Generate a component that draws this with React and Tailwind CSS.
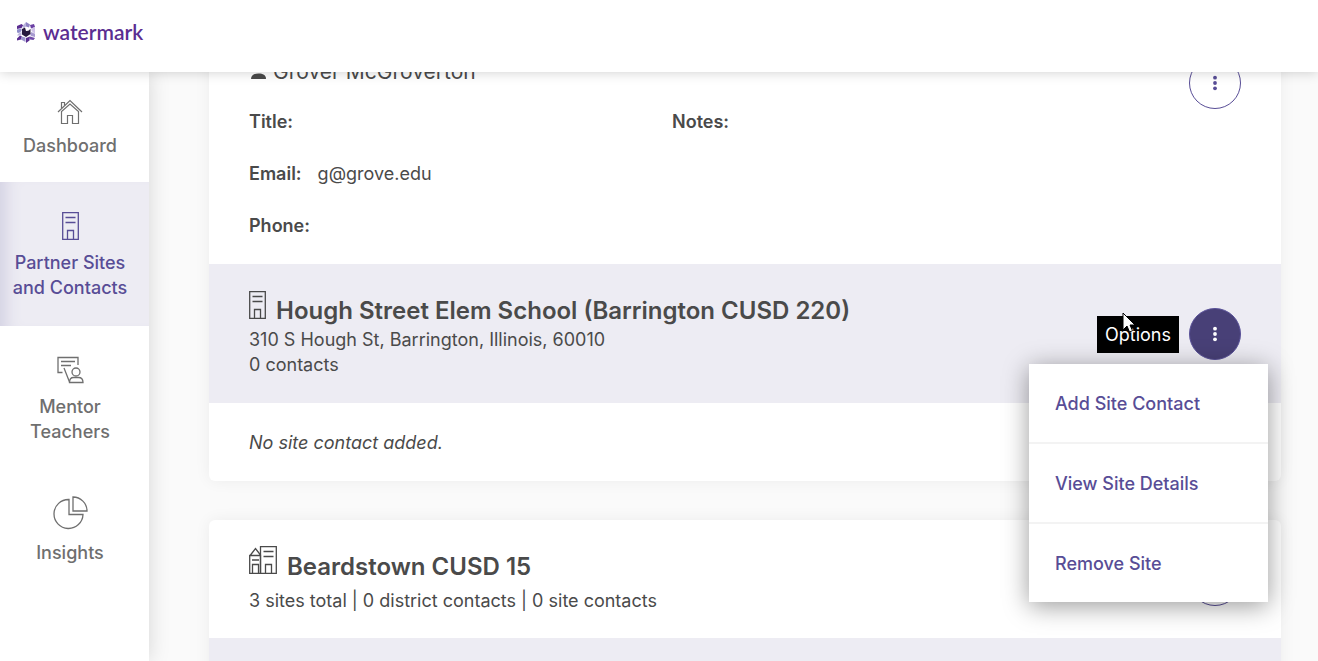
import { useState } from 'react'

const NAV = [
  { id: 'dashboard', lines: ['Dashboard'], icon: HouseIcon, box: 'h-[110px] gap-2 pt-[27px]' },
  { id: 'sites', lines: ['Partner Sites', 'and Contacts'], icon: SiteIcon, box: 'h-36 gap-2.5 pt-[30px]' },
  { id: 'mentors', lines: ['Mentor', 'Teachers'], icon: MentorIcon, box: 'h-36 gap-2.5 pt-[30px]' },
  { id: 'insights', lines: ['Insights'], icon: PieIcon, box: 'h-[132px] gap-2.5 pt-[26px]' },
]

const MENU = ['Add Site Contact', 'View Site Details', 'Remove Site']

function Logo() {
  return (
    <svg width="18" height="21" viewBox="0 0 18 21" aria-hidden="true">
      <path d="M0 4l4.500-2 2 1.500L4.500 6 0 7z" fill="#5b2d91" />
      <path d="M9 0l4 2.500-1 3-3-1z" fill="#8f83c4" />
      <path d="M9 0v4.500L6.500 6 5 4.500z" fill="#b9b3dc" />
      <path d="M13 3l4-1 1 3-4 1.500z" fill="#6a3fa3" />
      <path d="M18 5v7l-3.500-3V6.500z" fill="#cfc2e8" />
      <path d="M0 7.500l4.500-1V9L2 11 0 10.500z" fill="#8f8dc9" />
      <path d="M0 13.500L2 11l2.500-1V13l-2 .500z" fill="#c0badf" />
      <path d="M18 12v3l-4-1-1-2 1.500-2z" fill="#a79ad0" />
      <path d="M0 16.500l3-3 2 1-1 3-4 1z" fill="#5b2d91" />
      <path d="M4.500 14.500l4 1V20L4 17.500z" fill="#9b95cc" />
      <path d="M9 16l4-1.500-.500 4L9 21z" fill="#5b2d91" />
      <path d="M13 14.500l5 1.500-1.500 2-3.500-.500z" fill="#6f4aa8" />
      <path d="M5 7l3-1.500L9 9l4.500-2v5L9 15l-4-2.500z" fill="#261a3d" />
      <path d="M9 5l4 1.500-1 2L9 9z" fill="#fff" />
    </svg>
  )
}

function HouseIcon() {
  return (
    <svg width="26" height="26" viewBox="0 0 26 26" fill="none" stroke="currentColor" strokeWidth="1.200" aria-hidden="true">
      <path d="M1 13L13 1.500l12 11.500" />
      <path d="M4.500 12.500v12h6v-8h5v8h6v-12L13 5z" />
      <path d="M4.500 9V3.500h3v3" />
    </svg>
  )
}

function SiteIcon() {
  return (
    <svg width="17" height="28" viewBox="0 0 17 28" fill="none" stroke="currentColor" strokeWidth="1.300" aria-hidden="true">
      <path d="M.7.7h15.600v26.600H.7z" />
      <path d="M3.500 5.500h10M3.500 10.500h10M5.500 27.500v-9h6v9" />
    </svg>
  )
}

function DistrictIcon() {
  return (
    <svg width="28" height="28" viewBox="0 0 28 28" fill="none" stroke="currentColor" strokeWidth="1.300" aria-hidden="true">
      <path d="M11.500.7h15.800v26.600H11.500zM14.500 5.500h10M14.500 10.500h10M16.500 27.500v-9h6v9" />
      <path d="M.7 9.500h10.800v17.800H.7zM1.500 9l5-6.500 5 6.500M3 14h7M3.500 27.500v-9h6v9" />
    </svg>
  )
}

function MentorIcon() {
  return (
    <svg width="27" height="28" viewBox="0 0 27 28" fill="none" stroke="currentColor" strokeWidth="1.300" aria-hidden="true">
      <path d="M5.500 16.500H1V1.500h20V9M4 5.500h14M4 9.500h10M7 12l5.500 14" />
      <circle cx="19" cy="16" r="4" />
      <path d="M12.500 26.500c0-3.500 2-5 4-5h5c2.500 0 4.500 1.500 4.500 5z" />
    </svg>
  )
}

function PieIcon() {
  return (
    <svg width="36" height="34" viewBox="0 0 36 34" fill="none" stroke="currentColor" strokeWidth="1.300" aria-hidden="true">
      <path d="M17 3.500a14.500 14.500 0 1 0 14 15H17z" />
      <path d="M21 1v14h14A14 14 0 0 0 21 1z" />
    </svg>
  )
}

function OptionsButton({ active, label, onClick }) {
  return (
    <button
      type="button"
      aria-label={label}
      onClick={onClick}
      className={
        active
          ? 'flex size-[52px] shrink-0 items-center justify-center rounded-full border border-[#5a5299] bg-[#484077] text-white'
          : 'flex size-[52px] shrink-0 items-center justify-center rounded-full border border-[#584d96] bg-white text-[#584d96]'
      }
    >
      <svg width="4" height="16" viewBox="0 0 4 16" fill="currentColor" aria-hidden="true">
        <circle cx="2" cy="2.700" r="1.900" />
        <circle cx="2" cy="8" r="1.900" />
        <circle cx="2" cy="13.300" r="1.900" />
      </svg>
    </button>
  )
}

function SideNav({ current, onSelect }) {
  return (
    <nav className="z-10 w-[149px] shrink-0 bg-white shadow-[0_0_20px_rgba(0,0,0,0.15)]">
      {NAV.map(({ id, lines, icon: Icon, box }) => (
        <a
          key={id}
          href={`#${id}`}
          onClick={() => onSelect(id)}
          className={
            'flex flex-col items-center pr-[9px] text-center text-lg leading-[25px] font-medium ' + box + ' ' +
            (id === current
              ? 'bg-[#edecf3] text-[#584d96] shadow-[inset_18px_0_16px_-12px_#d3d1e3]'
              : 'text-[#6f6f6f]')
          }
        >
          <Icon />
          <span>
            {lines.map(line => <span key={line} className="block whitespace-nowrap">{line}</span>)}
          </span>
        </a>
      ))}
    </nav>
  )
}

function SiteMenu() {
  return (
    <ul className="absolute top-14 right-[-27px] z-10 w-[239px] divide-y-2 divide-[#f3f3f3] bg-white shadow-[0_4px_24px_rgba(0,0,0,0.4)]">
      {MENU.map(item => (
        <li key={item}>
          <button type="button" className="h-[78px] w-full px-[26px] pt-0.5 text-left text-lg font-medium text-[#584d96]">
            {item}
          </button>
        </li>
      ))}
    </ul>
  )
}

function Pointer() {
  return (
    <svg className="absolute -top-1 left-[25px]" width="13" height="21" viewBox="0 0 13 21" aria-hidden="true">
      <path d="M1 1v17l4-4 2.500 6 3-1.300L8 13h5z" fill="#fff" stroke="#000" strokeWidth="1" />
    </svg>
  )
}

export default function App() {
  const [current, setCurrent] = useState('sites')
  const [open, setOpen] = useState(true)

  return (
    <div className="flex h-screen flex-col overflow-hidden bg-[#fafafa] font-['Inter',sans-serif] text-lg text-[#4a4a4a]">
      <header className="z-20 flex h-[72px] shrink-0 items-center gap-2 bg-white px-[17px] pb-2 shadow-[0_0_12px_rgba(0,0,0,0.2)]">
        <Logo />
        <span className="font-['Lato',sans-serif] text-[21px] font-semibold text-[#5b2d91]">watermark</span>
      </header>

      <div className="flex min-h-0 flex-1">
        <SideNav current={current} onSelect={setCurrent} />

        <main className="-mt-8 min-w-0 flex-1 pr-[37px] pl-[60px]">
          <section className="mb-[39px] rounded-md bg-white shadow-[0_0_16px_rgba(0,0,0,0.06)]">
            <div className="flex items-start px-10 pt-[17px] pb-[25px]">
              <div className="flex-1">
                <h3 className="flex h-[30px] items-center gap-[7px] text-[21px]">
                  <svg className="ml-0.5" width="15" height="16" viewBox="0 0 15 16" fill="currentColor" aria-hidden="true">
                    <circle cx="7" cy="4" r="4" />
                    <path d="M0 15c0-4 3-5.500 7.500-5.500S15 11 15 15z" />
                  </svg>
                  Grover McGroverton
                </h3>
                <dl className="mt-[22px] grid grid-cols-[423px_1fr] gap-y-[26px] leading-[26px]">
                  <div className="flex gap-4"><dt className="font-semibold">Title:</dt><dd /></div>
                  <div className="flex gap-4"><dt className="font-semibold">Notes:</dt><dd /></div>
                  <div className="col-span-2 flex gap-4"><dt className="font-semibold">Email:</dt><dd>g@grove.edu</dd></div>
                  <div className="col-span-2 flex gap-4"><dt className="font-semibold">Phone:</dt><dd /></div>
                </dl>
              </div>
              <OptionsButton label="Contact options" />
            </div>

            <div className="flex items-center bg-[#edecf3] px-10 pt-[27px] pb-[26px]">
              <div className="flex-1">
                <h2 className="flex h-9 items-start gap-2.5 text-2xl leading-10 font-semibold">
                  <SiteIcon />
                  Hough Street Elem School (Barrington CUSD 220)
                </h2>
                <p className="leading-[25px]">310 S Hough St, Barrington, Illinois, 60010</p>
                <p className="leading-[25px]">0 contacts</p>
              </div>
              <div className="relative flex items-center gap-2.5">
                <div role="tooltip" className="relative bg-black px-2 leading-[37px] text-white">
                  Options
                  <Pointer />
                </div>
                <OptionsButton active label="Site options" onClick={() => setOpen(o => !o)} />
                {open && <SiteMenu />}
              </div>
            </div>

            <p className="px-10 pt-[27px] pb-[25px] leading-[26px] italic">No site contact added.</p>
          </section>

          <section className="rounded-md bg-white shadow-[0_0_16px_rgba(0,0,0,0.06)]">
            <div className="flex items-center px-10 pt-[26px] pb-6">
              <div className="flex-1">
                <h2 className="flex items-start gap-2.5 text-2xl leading-[42px] font-semibold">
                  <DistrictIcon />
                  Beardstown CUSD 15
                </h2>
                <p className="leading-[26px]">3 sites total | 0 district contacts | 0 site contacts</p>
              </div>
              <OptionsButton label="District options" />
            </div>
            <div className="h-36 bg-[#edecf3]" />
          </section>
        </main>
      </div>
    </div>
  )
}
